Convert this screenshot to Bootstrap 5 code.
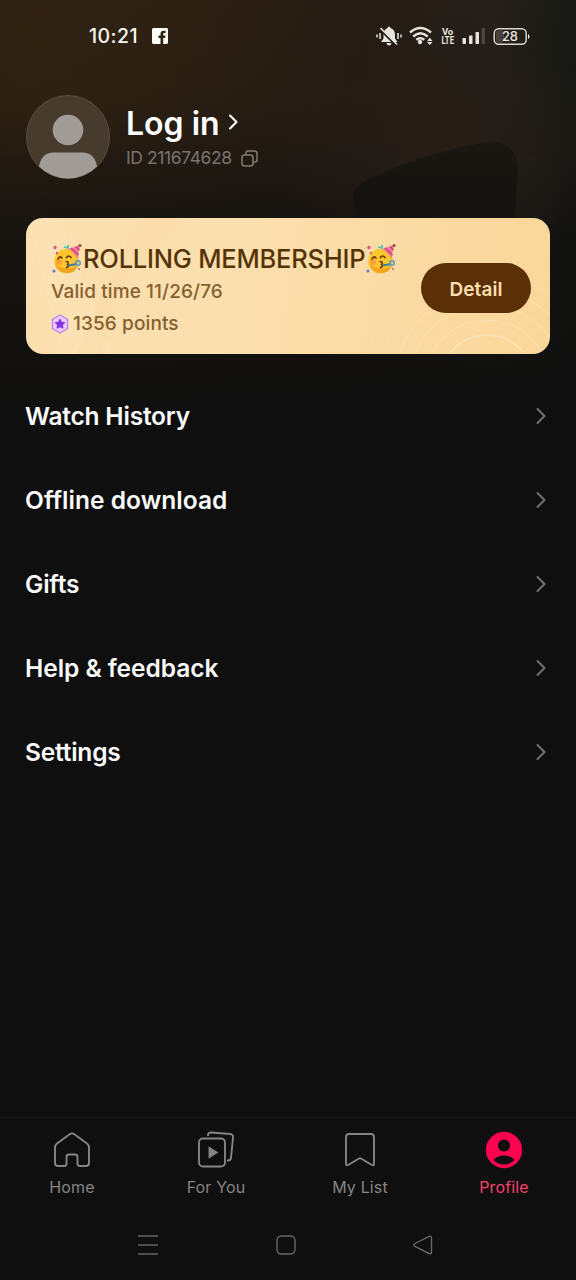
<!DOCTYPE html>
<html lang="en">
<head>
<meta charset="utf-8">
<meta name="viewport" content="width=device-width, initial-scale=1">
<title>Profile</title>
<link href="https://cdn.jsdelivr.net/npm/bootstrap@5.3.0/dist/css/bootstrap.min.css" rel="stylesheet">
<style>
body{background:#0f0f0f;color:#fff;font-family:Inter,"Liberation Sans",sans-serif;height:1280px;overflow:hidden}
svg{display:block;flex:none}
.screen{height:1280px;background:
 radial-gradient(190px 110px at 450px 155px,rgba(42,31,23,.7),rgba(42,31,23,0)),
 linear-gradient(180deg,rgba(15,15,15,0) 0,rgba(15,15,15,.12) 100px,rgba(15,15,15,.68) 220px,#0f0f0f 430px),
 radial-gradient(320px 240px at 50px 70px,rgba(60,40,16,.5),rgba(60,40,16,0)),
 linear-gradient(90deg,#2b2014 0,#261c14 60%,#261f19 86%,#171914 100%)}
.leaf{left:340px;top:130px}
.statusbar{height:72px;padding:0 45px 0 89px}
.clock{font-size:19.5px;font-weight:500;line-height:24px;letter-spacing:.45px;color:#fbf7f0}
.account{padding:23px 26px 0;height:146px}
.account-text{padding:10px 0 0 16px}
.avatar{width:84px;height:84px}
.login{font-size:32px;font-weight:600;line-height:38px;letter-spacing:0}
.uid{font-size:17.5px;line-height:22px;color:#79736c;letter-spacing:-.4px}
.id-row{margin-top:4px}
.member{margin:0 26px;height:136px;border-radius:17px;background:linear-gradient(100deg,#fbdfae,#fbdfae 40%,#fad69a)}
.member-title{font-size:25.5px;font-weight:500;line-height:32px;color:#553307;letter-spacing:-.22px;margin-bottom:1px}
.member-line{font-size:19px;font-weight:500;line-height:32px;color:#86602e;letter-spacing:.1px}
.detail,.detail:hover{width:110px;height:50px;background:#5b3007;color:#fddfad;font-size:19px;font-weight:600;letter-spacing:.05px}
.menu{padding-top:20px}
.menu-row{height:84px;padding:0 30px 0 25px;font-size:24.5px;font-weight:600;letter-spacing:-.2px;color:#fafafa;text-decoration:none}
.menu-row:nth-child(2){letter-spacing:.05px}
.menu-row:nth-child(4){letter-spacing:-.05px}
.tabs{height:93px;border-top:1px solid #1b1b1b;padding-top:13px}
.tab-item{color:#858585;font-size:16px;line-height:24px;text-decoration:none;letter-spacing:.15px}
.tab-label{margin-top:6px}
.tab-item.active{color:#f8416b}
.sysnav{height:70px;padding:0 143px 0 137px}
</style>
</head>
<body>
<main class="screen position-relative d-flex flex-column">
 <svg class="leaf position-absolute" width="236" height="100" viewBox="340 130 236 100"><defs><linearGradient id="lf" x2="0" y2="1"><stop stop-color="#1b1712"/><stop offset=".6" stop-color="#14130f"/></linearGradient></defs><path d="M545 158Q562 190 555 224H512V150Z" fill="#24221b" opacity=".18"/><path d="M354 224V200Q352 188 365 181Q430 150 490 142Q517 140 518 170L514 224Z" fill="url(#lf)"/></svg>

 <header class="statusbar d-flex align-items-center justify-content-between position-relative">
  <div class="d-flex align-items-center"><span class="clock">10:21</span>
   <svg style="margin-left:14px" width="16" height="16" viewBox="0 0 16 16"><path fill="#fffdf8" d="M1 0H15L16 1V15L15 16H11.2V10H13.2L13.5 7.4H11.2V6.2Q11.2 5.1 12.3 5.1H13.6V2.8H11.6Q8.5 2.8 8.5 5.9V7.4H6.5V10H8.5V16H1L0 15V1Z"/></svg></div>
  <svg width="156" height="24" viewBox="375 24 156 24" fill="#e7e3dd">
   <path d="M389 26.5Q390.2 26.5 390.5 28Q395 29.5 395 34.5V38.5L397.5 42H381L383.5 38.5V34.5Q383.5 29.5 387.5 28Q387.8 26.5 389 26.5ZM386.500 43H391.500Q391 45.500 389 45.500T386.500 43Z"/><path d="M381 30.500L396 45.500" stroke="#211a14" stroke-width="1.800"/><path d="M380.500 28L397 44.500" stroke="#e7e3dd" stroke-width="1.700"/><path d="M377 34.500V37.500M380 33V39M398 33V39M401 34.500V37.500" stroke="#e7e3dd" stroke-width="1.500"/>
   <g fill="none" stroke="#e7e3dd" stroke-width="2.400"><path d="M410 32.500Q420.300 23.500 431 32.500"/><path d="M413.200 36.500Q420.300 30 427.700 36.500"/><path d="M416.300 39.800Q420.300 36.500 424.300 39.800"/></g><circle cx="420" cy="42" r="2.200"/><path d="M427 41L429.800 37.700L432.500 41ZM427 42L429.800 45L432.500 42Z"/>
   <text x="442" y="35" font-family="Roboto" font-weight="700" font-size="9.500" textLength="11">Vo</text><text x="441.500" y="44" font-family="Roboto" font-weight="700" font-size="10" textLength="12.500" lengthAdjust="spacingAndGlyphs">LTE</text>
   <rect x="462.500" y="38" width="3.500" height="6" rx=".7"/><rect x="469" y="35.500" width="3.500" height="8.500" rx=".7"/><rect x="475.500" y="32" width="3.500" height="12" rx=".7"/><rect x="481.500" y="28" width="3.500" height="16" rx=".7" opacity=".2"/>
   <rect x="494.200" y="28.700" width="32" height="15.500" rx="4.500" fill="none" stroke="#d9d5cf" stroke-width="1.500"/><rect x="496" y="30.500" width="8" height="12" rx="2.500" opacity=".18"/><path d="M528 34Q529.500 34.500 529.500 36.500T528 39Z"/>
   <text x="502" y="41.300" font-family="Inter" font-weight="500" font-size="13" textLength="16">28</text>
  </svg>
 </header>

 <section class="account d-flex position-relative">
  <svg class="avatar" viewBox="0 0 84 84"><defs><clipPath id="av"><circle cx="42" cy="42" r="41.500"/></clipPath></defs><circle cx="42" cy="42" r="41.500" fill="#473b2e" stroke="#5a4e41"/><g fill="#a19c97" clip-path="url(#av)"><circle cx="42" cy="35" r="15.300"/><path d="M13 72Q15 57.500 28 57.500H56Q69 57.500 71 72V84H13Z"/></g></svg>
  <div class="account-text">
   <div class="d-flex align-items-center"><span class="login">Log in</span><svg style="margin:-4px 0 0 8px" width="12" height="18" viewBox="0 0 12 18"><path d="M2 2.500L8.500 9L2 15.500" fill="none" stroke="#fff" stroke-width="2.100" stroke-linecap="round" stroke-linejoin="round"/></svg></div>
   <div class="id-row d-flex align-items-center"><span class="uid">ID 211674628</span><svg style="margin-left:9px" width="17" height="17" viewBox="0 0 17 17" fill="none" stroke="#817b74" stroke-width="1.500"><rect x="1" y="5" width="11" height="11" rx="2.500"/><path d="M5 5V3Q5 1 7 1H13.500Q16 1 16 3.500V10Q16 12 14 12H12"/></svg></div>
  </div>
 </section>

 <section class="member position-relative overflow-hidden d-flex align-items-center justify-content-between">
  <svg class="position-absolute top-0 start-0" width="524" height="136" viewBox="0 0 524 136"><path d="M0 0H34L86 136H36Z" fill="#fbe5bb" opacity=".45"/><path d="M112 0H160L100 60L75 136H50Z" fill="#f8d99e" opacity=".25"/><g fill="none" stroke="#fff0cf" opacity=".42"><circle cx="461" cy="164" r="47" stroke-width="1.800"/><circle cx="461" cy="164" r="62"/><circle cx="461" cy="164" r="77"/><circle cx="461" cy="164" r="92"/><circle cx="461" cy="164" r="107" opacity=".5"/><circle cx="461" cy="164" r="122" opacity=".4"/></g></svg>
  <div class="position-relative" style="padding:10px 0 0 25px">
   <div class="member-title d-flex align-items-center">
    <svg width="32" height="32" viewBox="0 0 32 32"><defs><symbol id="party" viewBox="0 0 32 32"><circle cx="15.500" cy="18" r="12.300" fill="#fdc62f"/><path d="M4 21Q8 31 17 30Q25 29 27 22Q17 30 4 21Z" fill="#f3a41d"/><circle cx="8" cy="19" r="3" fill="#f58b3b" opacity=".65"/><path d="M17 6L29 2L26.500 16Q23 9 17 6Z" fill="#f07ba1"/><path d="M20 5L27.500 12M25 3.500L28.500 7" stroke="#cf416f" stroke-width="1.500"/><circle cx="29" cy="2.500" r="1.500" fill="#9b4356"/><path d="M7 16Q8.500 12.500 11 15M15.500 14.500Q17.500 11.500 20 14.500" fill="none" stroke="#67350b" stroke-width="1.700" stroke-linecap="round"/><path d="M14.500 18.500Q19 18.500 16.500 21.500Q19 23 15 25" fill="none" stroke="#71380f" stroke-width="1.600"/><path d="M17.500 22.500L26 21" stroke="#387f99" stroke-width="2"/><circle cx="27" cy="20" r="2.300" fill="none" stroke="#5696cf" stroke-width="1.500"/><circle cx="4" cy="4.500" r="1.700" fill="#de5680"/><path d="M13 4L17 5L17 2" fill="none" stroke="#4bc0bb" stroke-width="1.700"/><circle cx="3" cy="28" r="1.500" fill="#597ec8"/><circle cx="6" cy="10" r="1.200" fill="#e95770"/><circle cx="28" cy="26" r="1" fill="#d35b65"/></symbol></defs><use href="#party" width="32" height="32"/></svg><span>ROLLING MEMBERSHIP</span><svg width="32" height="32"><use href="#party" width="32" height="32"/></svg></div>
   <div class="member-line">Valid time 11/26/76</div>
   <div class="member-line d-flex align-items-center"><svg class="me-1" width="18" height="20" viewBox="0 0 18 20"><path d="M9 1L16.500 5.200V14.500L9 19L1.500 14.500V5.200Z" fill="#e9ccff" stroke="#c27df4" stroke-width="1.300" stroke-linejoin="round"/><path d="M9 5.300L10.500 8.200L13.700 8.700L11.400 11L12 14.200L9 12.700L6 14.200L6.600 11L4.300 8.700L7.500 8.200Z" fill="#8133de" stroke="#8133de" stroke-linejoin="round"/></svg><span>1356 points</span></div>
  </div>
  <a class="detail btn rounded-pill border-0 d-flex align-items-center justify-content-center p-0 position-relative" style="margin:4px 19px 0 0" href="#"><span class="pt-1">Detail</span></a>
 </section>

 <svg width="0" height="0" class="position-absolute"><symbol id="chev" viewBox="0 0 10 18"><path d="M1.500 2L8.500 9L1.500 16" fill="none" stroke="#717171" stroke-width="2" stroke-linecap="round" stroke-linejoin="round"/></symbol></svg>
 <nav class="menu flex-grow-1">
  <a class="menu-row d-flex align-items-center justify-content-between" href="#"><span>Watch History</span><svg width="10" height="18"><use href="#chev"/></svg></a>
  <a class="menu-row d-flex align-items-center justify-content-between" href="#"><span>Offline download</span><svg width="10" height="18"><use href="#chev"/></svg></a>
  <a class="menu-row d-flex align-items-center justify-content-between" href="#"><span>Gifts</span><svg width="10" height="18"><use href="#chev"/></svg></a>
  <a class="menu-row d-flex align-items-center justify-content-between" href="#"><span>Help &amp; feedback</span><svg width="10" height="18"><use href="#chev"/></svg></a>
  <a class="menu-row d-flex align-items-center justify-content-between" href="#"><span>Settings</span><svg width="10" height="18"><use href="#chev"/></svg></a>
 </nav>

 <nav class="tabs row g-0 text-center">
  <a class="tab-item col d-flex flex-column align-items-center" href="#"><svg width="38" height="38" viewBox="0 0 38 38" fill="none" stroke="#858585" stroke-width="1.900"><path d="M5 35Q2 35 2 32V16.500Q2 14 4 12.500L17 3Q19 1.700 21 3L34 12.500Q36 14 36 16.500V32Q36 35 33 35H27Q24.500 35 24.500 32.500V26Q24.500 23.500 22 23.500H16Q13.500 23.500 13.500 26V32.500Q13.500 35 11 35Z"/></svg><span class="tab-label">Home</span></a>
  <a class="tab-item col d-flex flex-column align-items-center" href="#"><svg width="38" height="38" viewBox="0 0 38 38" fill="none" stroke="#858585" stroke-width="1.900"><rect x="2" y="7.500" width="26" height="28" rx="4"/><path d="M11 5V4Q11.500 1.200 14.500 1.500L33 3Q36.500 3.300 36 6.500L34 27Q33.500 30 30 29.500"/><path d="M12.500 17V26L19.500 21.500Z" fill="#858585"/></svg><span class="tab-label">For You</span></a>
  <a class="tab-item col d-flex flex-column align-items-center" href="#"><svg width="38" height="38" viewBox="0 0 38 38" fill="none" stroke="#858585" stroke-width="1.900" stroke-linejoin="round"><path d="M5 6Q5 3 8 3H30Q33 3 33 6V33Q33 35 31 34L19 27L7 34Q5 35 5 33Z"/></svg><span class="tab-label">My List</span></a>
  <a class="tab-item active col d-flex flex-column align-items-center" href="#"><svg width="38" height="38" viewBox="0 0 38 38"><circle cx="19" cy="19" r="18.200" fill="#fc0352"/><circle cx="19" cy="14.500" r="6" fill="#0f0f0f"/><path d="M8.500 29Q12 24.500 19 24.500T29.500 29Q25 33.500 19 33.500T8.500 29Z" fill="#0f0f0f"/></svg><span class="tab-label">Profile</span></a>
 </nav>
 <nav class="sysnav d-flex align-items-center justify-content-between">
  <svg width="22" height="22" viewBox="0 0 22 22"><path d="M1 2H21M1 11H21M1 20H21" stroke="#646464" stroke-width="1.500"/></svg>
  <svg width="20" height="20" viewBox="0 0 20 20"><rect x="1" y="1" width="18" height="18" rx="4.500" fill="none" stroke="#686868" stroke-width="1.400"/></svg>
  <svg width="20" height="20" viewBox="0 0 20 20"><path d="M2 8.500L16 1.300Q18.500 .5 18.500 3V17Q18.500 19.500 16 18.500L2 11.500Q-.5 10 2 8.500Z" fill="none" stroke="#686868" stroke-width="1.400"/></svg>
 </nav>
</main>
<script src="https://cdn.jsdelivr.net/npm/bootstrap@5.3.0/dist/js/bootstrap.bundle.min.js"></script>
</body>
</html>
